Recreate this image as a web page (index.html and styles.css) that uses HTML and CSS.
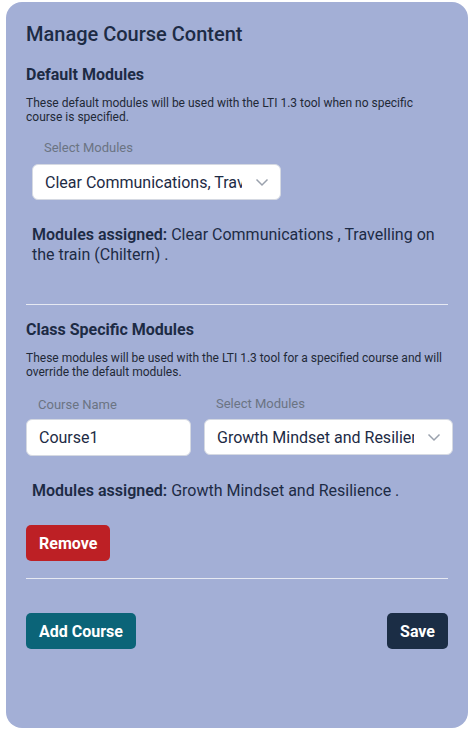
FILE: index.html
```html
<!DOCTYPE html>
<html lang="en">
<head>
    <meta charset="UTF-8">
    <meta name="viewport" content="width=device-width, initial-scale=1.0">
    <title>Manage Course Content</title>
    <link rel="stylesheet" href="styles.css">
</head>
<body>

    <div class="card">
        <h1>Manage Course Content</h1>

        <section class="block">
            <h2>Default Modules</h2>
            <p class="desc">These default modules will be used with the LTI 1.3 tool when no specific course is specified.</p>

            <div class="default-field">
                <label class="field-label">Select Modules</label>
                <div class="select">
                    <span class="select-text">Clear Communications, Travelling on the train (Chiltern)</span>
                    <svg class="chevron" width="16" height="16" viewBox="0 0 16 16"><path d="M2.5 5.5 L8 11 L13.5 5.5" fill="none" stroke="#9aa1ad" stroke-width="1.5"/></svg>
                </div>
            </div>

            <p class="assigned"><b>Modules assigned:</b> Clear Communications , Travelling on the train (Chiltern) .</p>
        </section>

        <hr class="divider">

        <section class="block">
            <h2>Class Specific Modules</h2>
            <p class="desc">These modules will be used with the LTI 1.3 tool for a specified course and will override the default modules.</p>

            <div class="course-row">
                <div class="field course-field">
                    <label class="field-label">Course Name</label>
                    <input class="text-input" type="text" value="Course1">
                </div>
                <div class="field modules-field">
                    <label class="field-label">Select Modules</label>
                    <div class="select">
                        <span class="select-text">Growth Mindset and Resilience</span>
                        <svg class="chevron" width="16" height="16" viewBox="0 0 16 16"><path d="M2.5 5.5 L8 11 L13.5 5.5" fill="none" stroke="#9aa1ad" stroke-width="1.5"/></svg>
                    </div>
                </div>
            </div>

            <p class="assigned single"><b>Modules assigned:</b> Growth Mindset and Resilience .</p>

            <button class="btn btn-remove" type="button">Remove</button>
        </section>

        <hr class="divider second">

        <div class="actions">
            <button class="btn btn-add" type="button">Add Course</button>
            <button class="btn btn-save" type="button">Save</button>
        </div>
    </div>

</body>
</html>
```

FILE: styles.css
```css
body {
    font-family: Roboto, 'Liberation Sans', sans-serif;
    background-color: #ffffff;
    margin: 0;
    padding: 2px 7px 2px 6px;
    color: #1d2b45;
}
.card {
    background-color: #a3afd6;
    border-radius: 16px;
    padding: 20px 20px 0 20px;
    height: 726px;
    box-sizing: border-box;
}
h1 {
    font-size: 20px;
    line-height: 24px;
    font-weight: 500;
    margin: 0 0 19px 0;
}
h2 {
    font-size: 16px;
    line-height: 20px;
    font-weight: 700;
    margin: 0 0 11px 0;
}
.desc {
    font-size: 12px;
    line-height: 14px;
    margin: 0;
    color: #1f2937;
}
.field-label {
    display: block;
    font-size: 13px;
    line-height: 16px;
    color: #6b7483;
}
.default-field {
    margin: 16px 0 0 6px;
    width: 249px;
}
.default-field .field-label {
    padding-left: 12px;
    margin-bottom: 8px;
}
.select {
    display: flex;
    align-items: center;
    background-color: #ffffff;
    border: 1px solid #d5d9e2;
    border-radius: 6px;
    height: 36px;
    box-sizing: border-box;
    padding: 0 10px 0 12px;
    gap: 12px;
}
.select-text {
    flex: 1;
    min-width: 0;
    font-size: 16px;
    color: #1d2b45;
    white-space: nowrap;
    overflow: hidden;
}
.chevron {
    flex: none;
}
.assigned {
    font-size: 16px;
    line-height: 20px;
    margin: 25px 0 0 6px;
}
.assigned b {
    font-weight: 600;
}
.divider {
    border: none;
    border-top: 1px solid #e6e9f2;
    margin: 39px 0 15px 0;
}
.divider.second {
    margin: 17px 0 34px 0;
}
.course-row {
    display: flex;
    gap: 13px;
    margin-top: 17px;
    align-items: flex-end;
}
.course-field {
    flex: none;
    width: 165px;
}
.course-field .field-label {
    padding-left: 12px;
    margin-bottom: 6px;
}
.modules-field {
    flex: 1;
    min-width: 0;
    margin-right: -5px;
    padding-bottom: 1px;
}
.modules-field .field-label {
    padding-left: 12px;
    margin-bottom: 7px;
}
.text-input {
    display: block;
    width: 100%;
    height: 37px;
    box-sizing: border-box;
    border: 1px solid #d5d9e2;
    border-radius: 6px;
    padding: 0 12px;
    font-family: inherit;
    font-size: 16px;
    color: #1d2b45;
}
.single {
    margin-top: 25px;
}
.btn {
    font-family: inherit;
    font-size: 16px;
    font-weight: 700;
    color: #ffffff;
    border: none;
    border-radius: 5px;
    height: 36px;
    padding: 0 13px;
    cursor: pointer;
}
.btn-remove {
    background-color: #bd2025;
    margin-top: 24px;
    width: 84px;
}
.actions {
    display: flex;
    justify-content: space-between;
}
.btn-add {
    background-color: #0b6478;
    width: 110px;
}
.btn-save {
    background-color: #1b2d45;
    width: 61px;
}
```
